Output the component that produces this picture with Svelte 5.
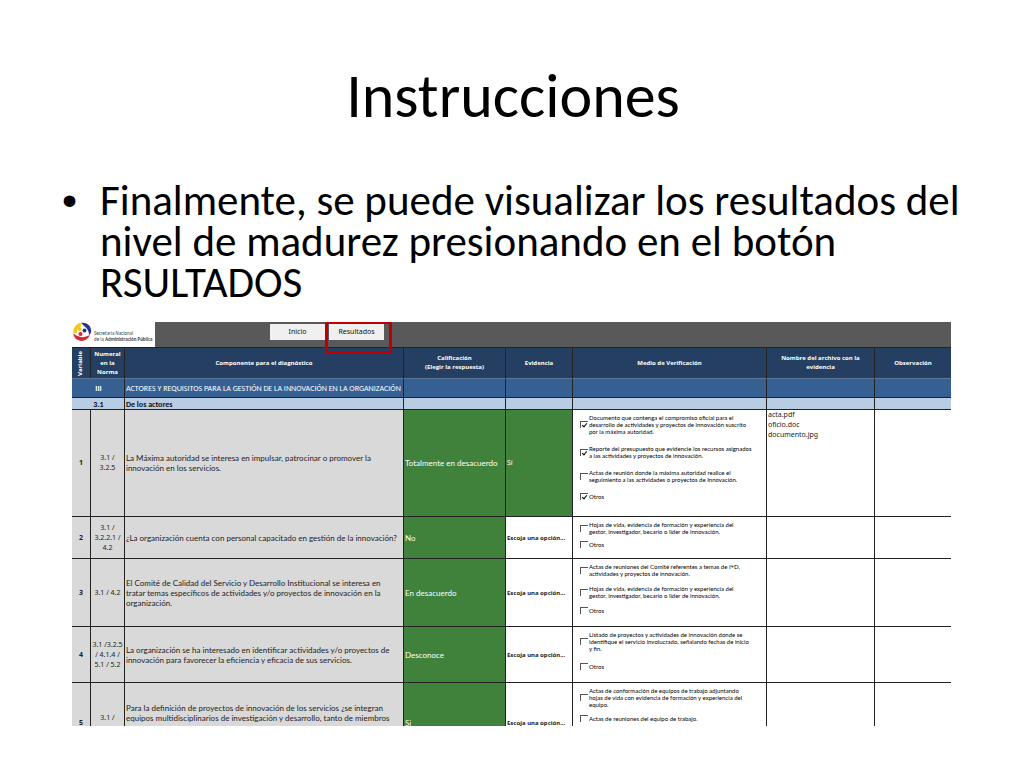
<script>
    const columns = [
        { label: 'Variable', width: 18, vertical: true },
        { label: 'Numeral\nen la\nNorma', width: 34 },
        { label: 'Componente para el diagnóstico', width: 279 },
        { label: 'Calificación\n(Elegir la respuesta)', width: 102 },
        { label: 'Evidencia', width: 67 },
        { label: 'Medio de Verificación', width: 194 },
        { label: 'Nombre del archivo con la\nevidencia', width: 108 },
        { label: 'Observación', width: 77 }
    ];
    const total = columns.reduce((sum, c) => sum + c.width, 0);

    const pending = 'Escoja una opción...';

    let rows = $state([
        {
            norm: '3.1 /\n3.2.5',
            text: 'La Máxima autoridad se interesa en impulsar, patrocinar o promover la\ninnovación en los servicios.',
            grade: 'Totalmente en desacuerdo',
            evidence: 'Sí',
            files: 'acta.pdf\noficio.doc\ndocumento.jpg',
            height: 107,
            gap: 10,
            checks: [
                { label: 'Documento que contenga el compromiso oficial para el\ndesarrollo de actividades y proyectos de innovación suscrito\npor la máxima autoridad.', done: true },
                { label: 'Reporte del presupuesto que evidencie los recursos asignados\na las actividades y proyectos de innovación.', done: true },
                { label: 'Actas de reunión donde la máxima autoridad realice el\nseguimiento a las actividades o proyectos de Innovación.', done: false },
                { label: 'Otros', done: true }
            ]
        },
        {
            norm: '3.1 /\n3.2.2.1 /\n4.2',
            text: '¿La organización cuenta con personal capacitado en gestión de la innovación?',
            grade: 'No',
            evidence: '',
            files: '',
            height: 42,
            gap: 6,
            checks: [
                { label: 'Hojas de vida, evidencia de formación y experiencia del\ngestor, investigador, becario o líder de innovación.', done: false },
                { label: 'Otros', done: false }
            ]
        },
        {
            norm: '3.1 / 4.2',
            text: 'El Comité de Calidad del Servicio y Desarrollo Institucional se interesa en\ntratar temas específicos de actividades y/o proyectos de innovación en la\norganización.',
            grade: 'En desacuerdo',
            evidence: '',
            files: '',
            height: 68,
            gap: 8,
            checks: [
                { label: 'Actas de reuniones del Comité referentes a temas de I+D,\nactividades y proyectos de innovación.', done: false },
                { label: 'Hojas de vida, evidencia de formación y experiencia del\ngestor, investigador, becario o líder de innovación.', done: false },
                { label: 'Otros', done: false }
            ]
        },
        {
            norm: '3.1 /3.2.5\n/ 4.1.4 /\n5.1 / 5.2',
            text: 'La organización se ha interesado en identificar actividades y/o proyectos de\ninnovación para favorecer la eficiencia y eficacia de sus servicios.',
            grade: 'Desconoce',
            evidence: '',
            files: '',
            height: 56,
            gap: 11,
            checks: [
                { label: 'Listado de proyectos y actividades de innovación donde se\nidentifique el servicio involucrado, señalando fechas de inicio\ny fin.', done: false },
                { label: 'Otros', done: false }
            ]
        },
        {
            norm: '3.1 /\n ',
            text: 'Para la definición de proyectos de innovación de los servicios ¿se integran\nequipos multidisciplinarios de investigación y desarrollo, tanto de miembros\n\n ',
            grade: 'Si',
            evidence: '',
            files: '',
            height: 80,
            gap: 7,
            checks: [
                { label: 'Actas de conformación de equipos de trabajo adjuntando\nhojas de vida con evidencia de formación y experiencia del\nequipo.', done: false },
                { label: 'Actas de reuniones del equipo de trabajo.', done: false }
            ]
        }
    ]);
</script>

<main>
    <h1>Instrucciones</h1>
    <ul>
        <li><span>Finalmente, se puede visualizar los resultados del nivel de madurez presionando en el botón RSULTADOS</span></li>
    </ul>

    <section class="sheet">
        <div class="toolbar">
            <div class="logo">
                <svg viewBox="0 0 20 20" aria-hidden="true">
                    <path d="M9 2.500A7.500 7.500 0 0 0 3.200 11" fill="none" stroke="#f5c518" stroke-width="3.500" />
                    <path d="M9 .8c5.500-.8 10 2.700 10.200 7.700 0 2-.8 3.600-2.200 4.700.2-3.500-1.200-6.700-5-9.200z" fill="#27348b" />
                    <path d="M1.200 11.500c.8 5.500 6 8.500 11 7 2.800-.9 4.800-3 5.500-5.500-4 2.200-7.500 2.700-10.700 1.600-1.800-.6-3.500-1.600-5.800-3.100z" fill="#d8262e" />
                    <circle cx="7.500" cy="7" r="2" fill="#f5c518" />
                    <circle cx="12.500" cy="8.500" r="2" fill="#27348b" />
                    <circle cx="8.500" cy="12" r="2" fill="#d8262e" />
                </svg>
                <p>Secretaría Nacional<br />de la <b>Administración Pública</b></p>
            </div>
            <div class="actions">
                <button type="button">Inicio</button>
                <span class="marked"><button type="button">Resultados</button></span>
            </div>
        </div>

        <table>
            <colgroup>
                {#each columns as col}
                    <col style="width:{(col.width / total) * 100}%" />
                {/each}
            </colgroup>
            <thead>
                <tr>
                    {#each columns as col}
                        <th scope="col"><span class:vertical={col.vertical}>{col.label}</span></th>
                    {/each}
                </tr>
            </thead>
            <tbody>
                <tr class="chapter">
                    <td></td>
                    <td class="num">III</td>
                    <td>ACTORES Y REQUISITOS PARA LA GESTIÓN DE LA INNOVACIÓN EN LA ORGANIZACIÓN</td>
                    <td></td><td></td><td></td><td></td><td></td>
                </tr>
                <tr class="topic">
                    <td></td>
                    <td class="num">3.1</td>
                    <td>De los actores</td>
                    <td></td><td></td><td></td><td></td><td></td>
                </tr>
                {#each rows as row, i}
                    <tr style="height:{row.height}px">
                        <td class="grey index">{i + 1}</td>
                        <td class="grey norm">{row.norm}</td>
                        <td class="grey text">{row.text}</td>
                        <td class="green text">{row.grade}</td>
                        <td class={row.evidence ? 'green' : 'pending'}>{row.evidence || pending}</td>
                        <td class="checks">
                            <div style="gap:{row.gap}px">
                                {#each row.checks as check}
                                    <label><input type="checkbox" bind:checked={check.done} /><span>{check.label}</span></label>
                                {/each}
                            </div>
                        </td>
                        <td class="files">{row.files}</td>
                        <td></td>
                    </tr>
                {/each}
            </tbody>
        </table>
    </section>
</main>

<style>
    :global(body) {
        margin: 0;
        background: #fff;
    }

    main {
        padding: 61px 60px 42px 62px;
        font-family: Carlito, Calibri, Lato, sans-serif;
        color: #000;
    }

    h1 {
        margin: 0;
        font-size: 62px;
        line-height: 70px;
        font-weight: 400;
        text-align: center;
    }

    ul {
        margin: 49px 0 19px;
        padding: 0;
        list-style: none;
        font-size: 43px;
        line-height: 41px;
    }

    li {
        display: flex;
    }

    li::before {
        content: "•";
        flex: none;
        width: 38px;
        font-family: "Liberation Sans", Arial, sans-serif;
    }

    .sheet {
        max-height: 404px;
        margin: 0 13px 0 10px;
        overflow: hidden;
        font-family: "Noto Sans", "Open Sans", sans-serif;
        font-size: 7px;
        line-height: 10px;
        color: #222;
    }

    .toolbar {
        display: flex;
        height: 25px;
        background: #595959;
    }

    .logo {
        display: flex;
        align-items: flex-start;
        gap: 2px;
        width: 83px;
        background: #fff;
    }

    .logo svg {
        width: 20px;
        height: 20px;
        flex: none;
    }

    .logo p {
        margin: 8px 0 0;
        font-family: Carlito, Lato, sans-serif;
        font-size: 5px;
        line-height: 6px;
        white-space: nowrap;
        color: #444;
    }

    .actions {
        display: flex;
        align-items: flex-start;
        gap: 4px;
        margin: 2px 0 0 115px;
    }

    button {
        display: block;
        width: 55px;
        height: 16px;
        padding: 0;
        border: 0;
        background: #f0f0f0;
        font: inherit;
        color: #111;
    }

    .marked {
        position: relative;
    }

    .marked::after {
        content: "";
        position: absolute;
        inset: -3px -8px -14px -4px;
        border: 3px solid #c00000;
        pointer-events: none;
    }

    table {
        width: 100%;
        table-layout: fixed;
        border-collapse: separate;
        border-spacing: 0;
    }

    th,
    td {
        box-sizing: border-box;
        padding: 0 1px;
        border-top: 1px solid #222;
        border-left: 1px solid #222;
        text-align: left;
        vertical-align: middle;
        white-space: pre;
    }

    th:first-child,
    td:first-child {
        border-left: 0;
    }

    th {
        height: 31px;
        background: #243f62;
        color: #fff;
        font-family: "Open Sans", "Noto Sans", sans-serif;
        font-size: 6px;
        line-height: 9px;
        text-align: center;
    }

    th span {
        display: block;
    }

    .vertical {
        writing-mode: vertical-rl;
        transform: rotate(180deg);
        margin: 0 auto;
    }

    .chapter td {
        height: 19px;
        background: #366092;
        border-top-color: #5c7896;
        color: #fff;
        font-family: Carlito, Lato, sans-serif;
        font-size: 8px;
    }

    .topic td {
        height: 12px;
        background: #b8cce4;
        font-family: Carlito, Lato, sans-serif;
        font-size: 8px;
        font-weight: 700;
        color: #111;
    }

    .chapter .num,
    .topic .num {
        border-left: 0;
        padding-right: 18px;
        font-weight: 700;
        text-align: center;
    }

    .grey {
        background: #d9d9d9;
    }

    .index {
        font-weight: 700;
        text-align: center;
    }

    .norm {
        padding: 0;
        text-align: center;
    }

    .text {
        font-family: Lato, sans-serif;
        font-size: 8px;
    }

    .green {
        background: #40813b;
        color: #fff;
    }

    .pending {
        font-size: 6px;
        font-weight: 700;
    }

    .checks {
        padding: 4px 0 0 7px;
        vertical-align: top;
        font-family: Lato, sans-serif;
        font-size: 6px;
        line-height: 7px;
        color: #000;
    }

    .checks div {
        display: flex;
        flex-direction: column;
    }

    label {
        display: flex;
        align-items: center;
        gap: 1px;
    }

    input {
        appearance: none;
        position: relative;
        flex: none;
        box-sizing: border-box;
        width: 8px;
        height: 7px;
        margin: 0;
        border: solid #555;
        border-width: 1px 0 0 1px;
    }

    input:checked::after {
        content: "";
        position: absolute;
        left: 2px;
        top: 0;
        width: 2px;
        height: 4px;
        border: solid #000;
        border-width: 0 1px 1px 0;
        transform: rotate(40deg);
    }

    .files {
        vertical-align: top;
    }
</style>
